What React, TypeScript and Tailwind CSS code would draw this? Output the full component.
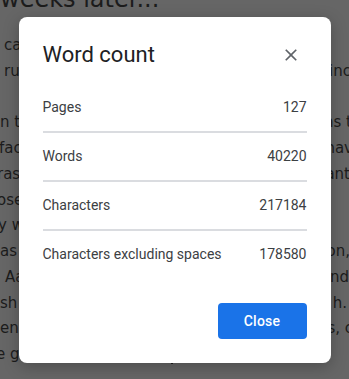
import React from "react";

type Line = { l: string; lm: string; r: string; rm: string };

const lines: Line[] = [
  { l: "ca", lm: "ml-[4px]", r: "", rm: "" },
  { l: "ru", lm: "ml-[4px]", r: "inc", rm: "-mr-[2px]" },
  { l: "", lm: "", r: "", rm: "" },
  { l: "n t", lm: "ml-[0px]", r: "ns t", rm: "-mr-[3px]" },
  { l: "fac", lm: "-ml-[1px]", r: "hav", rm: "-mr-[4px]" },
  { l: "ras", lm: "-ml-[3px]", r: "ant", rm: "-mr-[1px]" },
  { l: "ose", lm: "-ml-[3px]", r: "", rm: "" },
  { l: "y w", lm: "-ml-[2px]", r: "", rm: "" },
  { l: "as t", lm: "ml-[0px]", r: "on,", rm: "-mr-[1px]" },
  { l: "Aa", lm: "ml-[5px]", r: "nd", rm: "ml-[0px]" },
  { l: "sh a", lm: "ml-[0px]", r: "h.", rm: "mr-[2px]" },
  { l: "en", lm: "ml-[0px]", r: "s, c", rm: "-mr-[4px]" },
];

const rows: { label: string; value: string; border: boolean }[] = [
  { label: "Pages", value: "127", border: true },
  { label: "Words", value: "40220", border: true },
  { label: "Characters", value: "217184", border: true },
  { label: "Characters excluding spaces", value: "178580", border: false },
];

export default function App() {
  return (
    <div className="relative h-[379px] w-[349px] overflow-hidden bg-[#666666] text-[#1c1c1c]">
      <div className="flex flex-col font-['DejaVu_Sans',sans-serif]">
        <div className="-mt-[15px] h-[28px] whitespace-nowrap text-[24px] leading-[28px]">
          weeks later...
        </div>
        <div className="mt-[20px] flex flex-col text-[15px] leading-[25.75px]">
          {lines.map((ln, i) => (
            <div
              key={i}
              className="flex h-[25.75px] items-center justify-between whitespace-nowrap"
            >
              <span className={ln.lm}>{ln.l}</span>
              <span className={ln.rm}>{ln.r}</span>
            </div>
          ))}
          <div className="flex h-[25.75px] items-center whitespace-nowrap">
            <span className="-ml-[4px]">e get him to a hospital,</span>
            <span className="ml-[1px] inline-block h-[18px] w-[1.5px] bg-[#1c1c1c]" />
          </div>
        </div>
      </div>

      <div className="absolute inset-0 flex items-center justify-center">
        <div className="flex w-[312px] flex-col rounded-lg bg-white px-6 pb-6 pt-6 font-['Roboto',sans-serif] shadow-[0_4px_16px_rgba(0,0,0,0.25)]">
          <div className="flex h-7 items-center justify-between">
            <span className="text-[22px] leading-7 text-[#202124]">Word count</span>
            <svg
              className="mr-[6px] h-5 w-5"
              viewBox="0 0 24 24"
              fill="#5f6368"
              aria-hidden="true"
            >
              <path d="M19 6.41L17.59 5 12 10.59 6.41 5 5 6.41 10.59 12 5 17.59 6.41 19 12 13.41 17.59 19 19 17.59 13.41 12z" />
            </svg>
          </div>
          <div className="mt-[15px] flex flex-col text-sm text-[#3c4043]">
            {rows.map((r) =>
              r.border ? (
                <div
                  key={r.label}
                  className="flex h-[49px] items-center justify-between border-b-2 border-[#dadce0]"
                >
                  <span>{r.label}</span>
                  <span>{r.value}</span>
                </div>
              ) : (
                <div key={r.label} className="flex h-[47px] items-center justify-between">
                  <span>{r.label}</span>
                  <span>{r.value}</span>
                </div>
              )
            )}
          </div>
          <div className="mt-[25px] flex justify-end">
            <button className="h-9 w-[89px] rounded bg-[#1a73e8] text-sm font-medium tracking-[0.25px] text-white">
              Close
            </button>
          </div>
        </div>
      </div>
    </div>
  );
}
